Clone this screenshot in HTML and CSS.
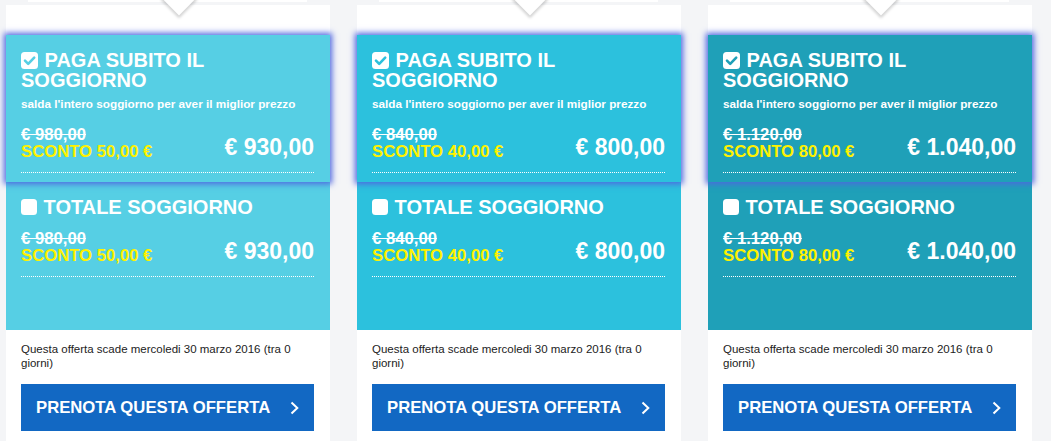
FILE: index.html
```html
<!DOCTYPE html>
<html lang="it">
<head>
<meta charset="utf-8">
<title>Offerte</title>
<link rel="stylesheet" href="styles.css">
</head>
<body>
<div class="offers">

  <div class="col c1">
    <div class="tab"></div>
    <div class="card">
      <div class="pricing">
        <div class="box selected">
          <div class="title"><svg class="cb" width="17" height="17" viewBox="0 0 17 17"><rect width="17" height="17" rx="3.5" fill="#fff"/><path class="tick" d="M4 8.6 L7.2 11.8 L13.2 5.6" fill="none" stroke-width="2.6" stroke-linecap="round" stroke-linejoin="round"/></svg> PAGA SUBITO IL SOGGIORNO</div>
          <div class="sub">salda l'intero soggiorno per aver il miglior prezzo</div>
          <div class="row">
            <div class="old"><div class="strike">€ 980,00</div><div class="disc">SCONTO 50,00 €</div></div>
            <div class="price">€ 930,00</div>
          </div>
        </div>
        <div class="box last">
          <div class="title"><svg class="cb off" width="16" height="16" viewBox="0 0 16 16"><rect width="16" height="16" rx="3.5" fill="#fff"/></svg> TOTALE SOGGIORNO</div>
          <div class="row">
            <div class="old"><div class="strike">€ 980,00</div><div class="disc">SCONTO 50,00 €</div></div>
            <div class="price">€ 930,00</div>
          </div>
        </div>
      </div>
      <div class="foot">
        <p class="expiry">Questa offerta scade mercoledi 30 marzo 2016 (tra 0 giorni)</p>
        <a class="btn" href="#">PRENOTA QUESTA OFFERTA <svg width="9" height="14" viewBox="0 0 9 14"><polyline points="1.5,1.5 7.3,7 1.5,12.5" fill="none" stroke="#fff" stroke-width="2"/></svg></a>
      </div>
    </div>
  </div>

  <div class="col c2">
    <div class="tab"></div>
    <div class="card">
      <div class="pricing">
        <div class="box selected">
          <div class="title"><svg class="cb" width="17" height="17" viewBox="0 0 17 17"><rect width="17" height="17" rx="3.5" fill="#fff"/><path class="tick" d="M4 8.6 L7.2 11.8 L13.2 5.6" fill="none" stroke-width="2.6" stroke-linecap="round" stroke-linejoin="round"/></svg> PAGA SUBITO IL SOGGIORNO</div>
          <div class="sub">salda l'intero soggiorno per aver il miglior prezzo</div>
          <div class="row">
            <div class="old"><div class="strike">€ 840,00</div><div class="disc">SCONTO 40,00 €</div></div>
            <div class="price">€ 800,00</div>
          </div>
        </div>
        <div class="box last">
          <div class="title"><svg class="cb off" width="16" height="16" viewBox="0 0 16 16"><rect width="16" height="16" rx="3.5" fill="#fff"/></svg> TOTALE SOGGIORNO</div>
          <div class="row">
            <div class="old"><div class="strike">€ 840,00</div><div class="disc">SCONTO 40,00 €</div></div>
            <div class="price">€ 800,00</div>
          </div>
        </div>
      </div>
      <div class="foot">
        <p class="expiry">Questa offerta scade mercoledi 30 marzo 2016 (tra 0 giorni)</p>
        <a class="btn" href="#">PRENOTA QUESTA OFFERTA <svg width="9" height="14" viewBox="0 0 9 14"><polyline points="1.5,1.5 7.3,7 1.5,12.5" fill="none" stroke="#fff" stroke-width="2"/></svg></a>
      </div>
    </div>
  </div>

  <div class="col c3">
    <div class="tab"></div>
    <div class="card">
      <div class="pricing">
        <div class="box selected">
          <div class="title"><svg class="cb" width="17" height="17" viewBox="0 0 17 17"><rect width="17" height="17" rx="3.5" fill="#fff"/><path class="tick" d="M4 8.6 L7.2 11.8 L13.2 5.6" fill="none" stroke-width="2.6" stroke-linecap="round" stroke-linejoin="round"/></svg> PAGA SUBITO IL SOGGIORNO</div>
          <div class="sub">salda l'intero soggiorno per aver il miglior prezzo</div>
          <div class="row">
            <div class="old"><div class="strike">€ 1.120,00</div><div class="disc">SCONTO 80,00 €</div></div>
            <div class="price">€ 1.040,00</div>
          </div>
        </div>
        <div class="box last">
          <div class="title"><svg class="cb off" width="16" height="16" viewBox="0 0 16 16"><rect width="16" height="16" rx="3.5" fill="#fff"/></svg> TOTALE SOGGIORNO</div>
          <div class="row">
            <div class="old"><div class="strike">€ 1.120,00</div><div class="disc">SCONTO 80,00 €</div></div>
            <div class="price">€ 1.040,00</div>
          </div>
        </div>
      </div>
      <div class="foot">
        <p class="expiry">Questa offerta scade mercoledi 30 marzo 2016 (tra 0 giorni)</p>
        <a class="btn" href="#">PRENOTA QUESTA OFFERTA <svg width="9" height="14" viewBox="0 0 9 14"><polyline points="1.5,1.5 7.3,7 1.5,12.5" fill="none" stroke="#fff" stroke-width="2"/></svg></a>
      </div>
    </div>
  </div>

</div>
</body>
</html>
```

FILE: styles.css
```css
html, body {
  margin: 0;
  padding: 0;
}
body {
  background: #f4f5f7;
  font-family: "Liberation Sans", Arial, Helvetica, sans-serif;
  color: #fff;
  height: 441px;
  overflow: hidden;
}
.offers {
  display: flex;
  gap: 27px;
  padding-left: 6px;
}
.col {
  width: 324px;
  display: flex;
  flex-direction: column;
}
.c1 { --teal: #56cfe4; }
.c2 { --teal: #2cc1dd; }
.c3 { --teal: #1fa0b8; }

.tab {
  height: 2px;
  margin: 0 23px 3px 22px;
  background: #fff;
  position: relative;
  z-index: 3;
}
.tab::after {
  content: "";
  position: absolute;
  left: 138px;
  top: -16px;
  width: 26px;
  height: 26px;
  background: #fff;
  transform: rotate(45deg);
  box-shadow: 2px 2px 3px rgba(0, 0, 0, 0.18);
}
.card {
  background: #fff;
  padding-top: 30px;
  padding-bottom: 40px;
}
.pricing {
  background: var(--teal);
}
.box {
  padding: 15px 16px 9px 15px;
  background: var(--teal);
}
.box.selected {
  position: relative;
  z-index: 1;
  box-shadow: 0 0 6px 2px #4f66e0;
}
.box.last {
  padding-bottom: 53px;
}
.title {
  font-size: 20px;
  line-height: 20px;
  font-weight: bold;
  margin-bottom: 7px;
}
.cb {
  vertical-align: -2px;
  margin-right: 1px;
}
.cb.off {
  vertical-align: -1px;
}
.tick {
  stroke: var(--teal);
}
.sub {
  font-size: 11.75px;
  line-height: 14px;
  font-weight: bold;
  margin-bottom: 15px;
}
.title + .row {
  margin-top: 13px;
}
.row {
  display: flex;
  justify-content: space-between;
  align-items: flex-end;
  padding-bottom: 12px;
  border-bottom: 1px dotted #fff;
}
.old {
  font-size: 16.7px;
  line-height: 17px;
  font-weight: bold;
}
.strike {
  text-decoration: line-through;
}
.disc {
  color: #fff200;
}
.price {
  font-size: 23px;
  line-height: 26px;
  font-weight: bold;
}
.foot {
  padding: 13px 16px 0 15px;
  color: #222;
}
.expiry {
  margin: 0;
  font-size: 11.5px;
  line-height: 13.5px;
}
.btn {
  margin-top: 14px;
  height: 47px;
  background: #1268c3;
  color: #fff;
  text-decoration: none;
  display: flex;
  align-items: center;
  justify-content: space-between;
  padding: 0 15px 0 15px;
  font-size: 16.7px;
  font-weight: bold;
}
.btn svg {
  display: block;
}
```
